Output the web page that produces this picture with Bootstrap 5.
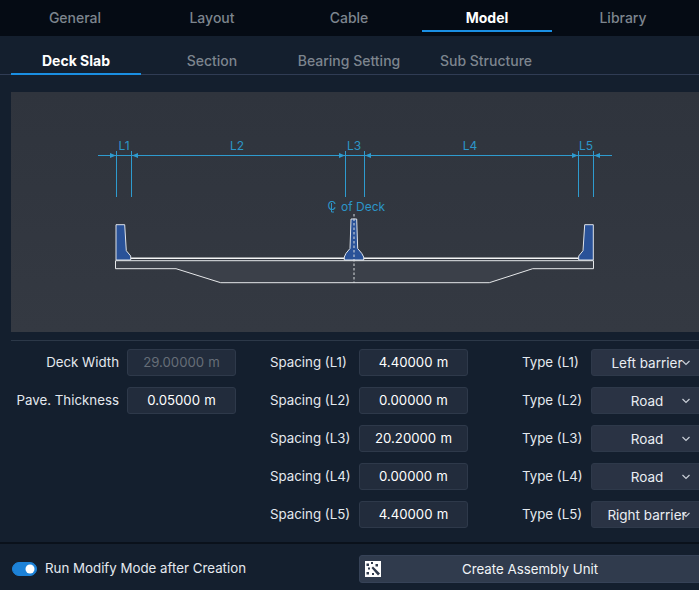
<!DOCTYPE html>
<html lang="en">
<head>
<meta charset="utf-8">
<title>Deck Slab</title>
<link href="https://cdn.jsdelivr.net/npm/bootstrap@5.3.0/dist/css/bootstrap.min.css" rel="stylesheet">
<style>
html,body{height:100%;overflow:hidden}
body{background:#141f2e;color:#e4e9ef;font-family:Inter,Roboto,"Liberation Sans",sans-serif;font-size:13.3px;width:699px}
.tab-main{background:#050b14;height:36px;padding-left:11px;gap:7px}
.tab-sub{height:37px;margin-top:2px;padding-left:11px;gap:7px;border-bottom:1px solid #303c54;background:#141f2e;flex-wrap:nowrap}
.tab-main .nav-link,.tab-sub .nav-link{width:130px;padding:0 2px 0 0;text-align:center;color:#7d858e;font-weight:500;font-size:14px;border-bottom:2px solid transparent}
.tab-main .nav-link{height:32px;line-height:36px}
.tab-sub .nav-link{height:37px;line-height:45px;margin-bottom:-1px}
.tab-main .nav-link.active,.tab-sub .nav-link.active{color:#fff;font-weight:700;padding:0;border-bottom-color:#1a8fe3}
.draw-box{margin:17px 0 0 11px;height:240px;background:linear-gradient(180deg,#2f343d,#343942);width:688px}
.draw-box svg{display:block}
.dim-text{font-family:Inter,Roboto,sans-serif;font-size:12px;fill:#2c95c8}
.form-area{margin:8px 0 0 11px;border-top:1px solid #2c3848;padding-top:8px;height:202px}
.field-col{display:flex;flex-direction:column;gap:11px;flex:none}
.col-one{width:225px}
.col-two{width:198px;margin-left:34px}
.col-three{width:181px;margin-left:54px}
.field-row{height:27px;display:flex;align-items:center;justify-content:space-between}
.field-label{color:#e4e9ef;font-size:13.3px;white-space:nowrap}
.value-box{width:109px;height:27px;flex:none;padding:0 4px 1px;text-align:center;font-size:13.2px;color:#fff;background:#222c3c;border:1px solid #2e394a;border-radius:3px;word-spacing:.5px;min-height:0}
.value-box:disabled{color:#666e78;background:#222c3c;opacity:1}
.pick-box{width:112px;height:27px;flex:none;padding:1px 0 0;text-align:center;font-size:13.5px;color:#e9edf2;background-color:#2a3344;border:1px solid #2e394a;border-radius:3px;background-size:10px 6px;background-position:right 11px center;min-height:0;
background-image:url("data:image/svg+xml,%3csvg xmlns='http://www.w3.org/2000/svg' viewBox='0 0 10 6'%3e%3cpath fill='none' stroke='%23c8ced6' stroke-width='1.2' d='M1.5 1l3.5 3.5L8.5 1'/%3e%3c/svg%3e")}
.foot-line{height:2px;background:#0a111b}
.foot-bar{height:46px;padding:11px 0 0 12px}
.switch-wrap{width:347px;flex:none;height:28px;margin:0;padding:0;min-height:0;gap:8px}
.switch-wrap .form-check-input{width:25px;height:14px;margin:0;float:none;background-color:#1d82d8;border-color:#1d82d8;flex:none}
.switch-wrap .form-check-label{font-size:13.3px;color:#e4e9ef}
.make-btn{width:344px;flex:none;height:28px;padding:0 2px 0 0;background:#303b4d;border:1px solid #364257;border-radius:3px;color:#f1f4f7;font-size:13.3px;position:relative;text-align:center;line-height:26px}
.make-btn svg{position:absolute;left:5px;top:5px}
</style>
</head>
<body>
<ul class="nav tab-main flex-nowrap">
<li class="nav-item"><a class="nav-link" href="#">General</a></li>
<li class="nav-item"><a class="nav-link" href="#">Layout</a></li>
<li class="nav-item"><a class="nav-link" href="#">Cable</a></li>
<li class="nav-item"><a class="nav-link active" href="#">Model</a></li>
<li class="nav-item"><a class="nav-link" href="#">Library</a></li>
</ul>
<ul class="nav tab-sub">
<li class="nav-item"><a class="nav-link active" href="#">Deck Slab</a></li>
<li class="nav-item"><a class="nav-link" href="#">Section</a></li>
<li class="nav-item"><a class="nav-link" href="#">Bearing Setting</a></li>
<li class="nav-item"><a class="nav-link" href="#">Sub Structure</a></li>
</ul>
<div class="draw-box">
<svg width="688" height="240" viewBox="11 92 688 240" xmlns="http://www.w3.org/2000/svg">
<g stroke="#2e9bcf" stroke-width="1" fill="none">
<path d="M98 155.5H612"/>
<path d="M116.5 151V197M131.5 151V197M345.5 151V197M364.5 151V197M578.5 151V197M593.5 151V197"/>
</g>
<g fill="#2e9bcf">
<path d="M116 155.5l-6-2.5v5zM132 155.5l6-2.5v5zM345 155.5l-6-2.5v5zM365 155.5l6-2.5v5zM578 155.5l-6-2.5v5zM594 155.5l6-2.5v5z"/>
</g>
<g text-anchor="middle">
<text class="dim-text" x="124" y="150">L1</text>
<text class="dim-text" x="237" y="150">L2</text>
<text class="dim-text" x="354" y="150">L3</text>
<text class="dim-text" x="470" y="150">L4</text>
<text class="dim-text" x="586" y="150">L5</text>
</g>
<text class="dim-text" x="327.5" y="210">C</text>
<path d="M331.5 203V212H334" stroke="#2c95c8" stroke-width="1" fill="none"/>
<text class="dim-text" x="341" y="210.5">of Deck</text>
<path d="M115.5 260.7H593.5V268.7H532.7L489.3 282.7H220.7L176 268.7H115.5Z" fill="#3b4049" stroke="#e6e8ea" stroke-width="1"/>
<path d="M131 258.3H345M364 258.3H579" stroke="#f4f5f6" stroke-width="1.6" fill="none"/>
<g fill="#2a5298" stroke="#dfe3e8" stroke-width="1">
<path d="M116 260V224.7H124.7L126.3 250.7L130.7 256V260Z"/>
<path d="M593.3 260V224.7H584.7L583 250.7L578.7 256V260Z"/>
<path d="M344.3 260V257L346 253.3L350 248.5L351 219H356.7L357.7 248.5L361.7 253.3L363.7 257V260Z"/>
</g>
<path d="M354 214V283" stroke="#d8dbde" stroke-width="1" stroke-dasharray="2.5 2" fill="none"/>
</svg>
</div>
<div class="form-area d-flex">
<div class="field-col col-one">
<div class="field-row"><label class="field-label ms-auto me-2">Deck Width</label><input class="form-control value-box" value="29.00000 m" disabled></div>
<div class="field-row"><label class="field-label ms-auto me-2">Pave. Thickness</label><input class="form-control value-box" value="0.05000 m"></div>
</div>
<div class="field-col col-two">
<div class="field-row"><label class="field-label">Spacing (L1)</label><input class="form-control value-box" value="4.40000 m"></div>
<div class="field-row"><label class="field-label">Spacing (L2)</label><input class="form-control value-box" value="0.00000 m"></div>
<div class="field-row"><label class="field-label">Spacing (L3)</label><input class="form-control value-box" value="20.20000 m"></div>
<div class="field-row"><label class="field-label">Spacing (L4)</label><input class="form-control value-box" value="0.00000 m"></div>
<div class="field-row"><label class="field-label">Spacing (L5)</label><input class="form-control value-box" value="4.40000 m"></div>
</div>
<div class="field-col col-three">
<div class="field-row"><label class="field-label">Type (L1)</label><select class="form-select pick-box"><option>Left barrier</option></select></div>
<div class="field-row"><label class="field-label">Type (L2)</label><select class="form-select pick-box"><option>Road</option></select></div>
<div class="field-row"><label class="field-label">Type (L3)</label><select class="form-select pick-box"><option>Road</option></select></div>
<div class="field-row"><label class="field-label">Type (L4)</label><select class="form-select pick-box"><option>Road</option></select></div>
<div class="field-row"><label class="field-label">Type (L5)</label><select class="form-select pick-box"><option>Right barrier</option></select></div>
</div>
</div>
<div class="foot-line"></div>
<div class="foot-bar d-flex align-items-start">
<div class="form-check form-switch switch-wrap d-flex align-items-center">
<input class="form-check-input" type="checkbox" role="switch" id="runMod" checked>
<label class="form-check-label" for="runMod">Run Modify Mode after Creation</label>
</div>
<button class="btn make-btn" type="button">
<svg width="16" height="16" viewBox="0 0 16 16" xmlns="http://www.w3.org/2000/svg"><rect width="16" height="16" fill="#fff"/><path d="M6.5 7l1.5-1.5 7 7-2 2z" fill="#303b4d"/><g fill="#303b4d"><rect x="1.5" y="2.5" width="2.5" height="2.5"/><rect x="6" y="1" width="2" height="2"/><rect x="10.5" y="3" width="2.5" height="2.5"/><rect x="3" y="6.5" width="2" height="2"/><rect x="1.5" y="11" width="2.5" height="2.5"/><rect x="7" y="12" width="2" height="2"/></g></svg>
Create Assembly Unit</button>
</div>
<script src="https://cdn.jsdelivr.net/npm/bootstrap@5.3.0/dist/js/bootstrap.bundle.min.js"></script>
</body>
</html>
